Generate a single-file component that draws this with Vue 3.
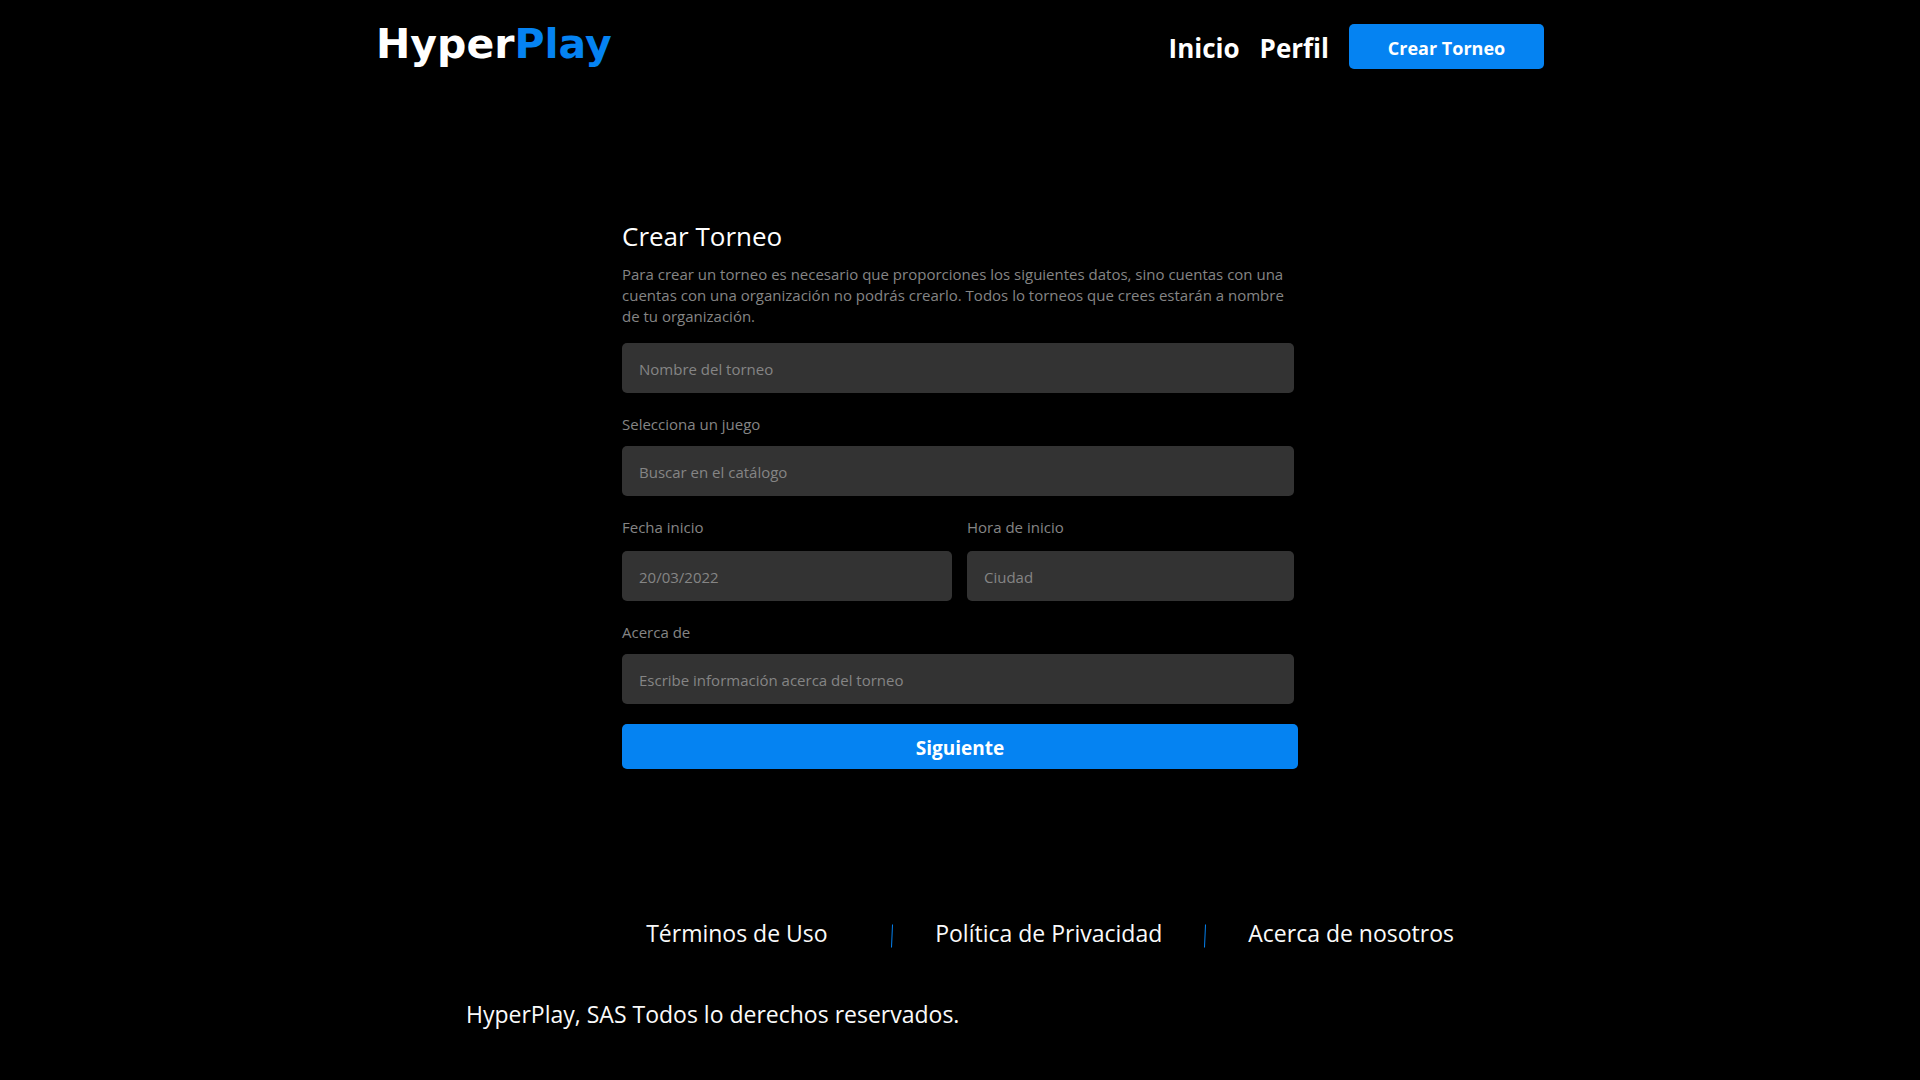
<script setup>
import { reactive } from 'vue'

const navLinks = ['Inicio', 'Perfil']
const footerLinks = ['Términos de Uso', 'Política de Privacidad', 'Acerca de nosotros']
const form = reactive({ name: '', game: '', date: '', time: '', about: '' })
</script>

<template>
  <div class="page">
    <header class="header">
      <a class="logo" href="#">Hyper<span class="logo-accent">Play</span></a>
      <nav class="nav">
        <a v-for="link in navLinks" :key="link" class="nav-link" href="#">{{ link }}</a>
        <button class="button nav-button" type="button">Crear Torneo</button>
      </nav>
    </header>

    <main class="main">
      <form class="form" @submit.prevent>
        <h1 class="title">Crear Torneo</h1>
        <p class="intro">
          Para crear un torneo es necesario que proporciones los siguientes datos, sino cuentas con una
          cuentas con una organización no podrás crearlo. Todos lo torneos que crees estarán a nombre de
          tu organización.
        </p>
        <div class="fields">
          <input v-model="form.name" class="input" type="text" placeholder="Nombre del torneo" aria-label="Nombre del torneo">
          <div class="field">
            <label class="label" for="game">Selecciona un juego</label>
            <input id="game" v-model="form.game" class="input" type="text" placeholder="Buscar en el catálogo">
          </div>
          <div class="row">
            <div class="field">
              <label class="label" for="date">Fecha inicio</label>
              <input id="date" v-model="form.date" class="input" type="text" placeholder="20/03/2022">
            </div>
            <div class="field">
              <label class="label" for="time">Hora de inicio</label>
              <input id="time" v-model="form.time" class="input" type="text" placeholder="Ciudad">
            </div>
          </div>
          <div class="field">
            <label class="label" for="about">Acerca de</label>
            <input id="about" v-model="form.about" class="input" type="text" placeholder="Escribe información acerca del torneo">
          </div>
        </div>
        <button class="button submit" type="submit">Siguiente</button>
      </form>
    </main>

    <footer class="footer">
      <nav class="footer-links">
        <template v-for="(link, i) in footerLinks" :key="link">
          <svg v-if="i > 0" class="divider" width="4" height="24" viewBox="0 0 4 24" aria-hidden="true">
            <path d="M2.5 0.5L1.5 23.5" stroke="#0583f2" stroke-width="1" />
          </svg>
          <a class="footer-link" href="#">{{ link }}</a>
        </template>
      </nav>
      <p class="copyright">HyperPlay, SAS Todos lo derechos reservados.</p>
    </footer>
  </div>
</template>

<style>
body {
  margin: 0;
  background: #000;
}
</style>

<style scoped>
.page {
  min-height: 100vh;
  box-sizing: border-box;
  background: #000;
  color: #fff;
  font-family: "Segoe UI", "Open Sans", "Noto Sans", sans-serif;
}

.header {
  display: flex;
  align-items: center;
  justify-content: space-between;
  max-width: 1168px;
  margin: 0 auto;
  padding: 24px 0;
}

.logo {
  padding-bottom: 5px;
  color: #fff;
  font-family: "DejaVu Sans", sans-serif;
  font-size: 41px;
  font-weight: 700;
  line-height: 40px;
  text-decoration: none;
}

.logo-accent {
  color: #0583f2;
}

.nav {
  display: flex;
  align-items: center;
  gap: 20px;
}

.nav-link {
  padding-top: 4px;
  color: #fff;
  font-size: 26px;
  font-weight: 700;
  line-height: 41px;
  text-decoration: none;
}

.button {
  height: 45px;
  padding: 2px 0 0;
  border: 0;
  border-radius: 5px;
  background: #0583f2;
  color: #fff;
  font-family: inherit;
  font-size: 18px;
  font-weight: 700;
  cursor: pointer;
}

.nav-button {
  width: 195px;
}

.main {
  padding: 124px 0 140px;
}

.form {
  max-width: 676px;
  margin: 0 auto;
}

.title {
  margin: 0;
  font-size: 26px;
  font-weight: 400;
  line-height: 38px;
}

.intro {
  margin: 9px 0 16px;
  color: #858585;
  font-size: 15px;
  line-height: 21px;
}

.fields {
  display: flex;
  flex-direction: column;
  gap: 20px;
  margin-right: 4px;
}

.field {
  display: flex;
  flex-direction: column;
  gap: 11px;
}

.row {
  display: grid;
  grid-template-columns: 110fr 109fr;
  gap: 15px;
}

.row .field {
  gap: 13px;
}

.label {
  color: #858585;
  font-size: 15px;
  line-height: 22px;
}

.input {
  width: 100%;
  height: 50px;
  box-sizing: border-box;
  padding: 2px 17px 0;
  border: 0;
  border-radius: 5px;
  background: #333;
  color: #fff;
  font-family: inherit;
  font-size: 15px;
}

.input::placeholder {
  color: #858585;
  opacity: 1;
}

.submit {
  width: 100%;
  margin-top: 20px;
  font-size: 19px;
}

.footer {
  max-width: 988px;
  margin: 0 auto;
}

.footer-links {
  display: flex;
  align-items: center;
  justify-content: flex-end;
  gap: 41px;
}

.divider {
  margin-top: 5px;
}

.footer-link {
  min-width: 203px;
  color: #fafafa;
  font-size: 23px;
  line-height: 48px;
  text-decoration: none;
}

.copyright {
  margin: 33px 0 0;
  color: #fafafa;
  font-size: 23px;
  line-height: 48px;
}
</style>
